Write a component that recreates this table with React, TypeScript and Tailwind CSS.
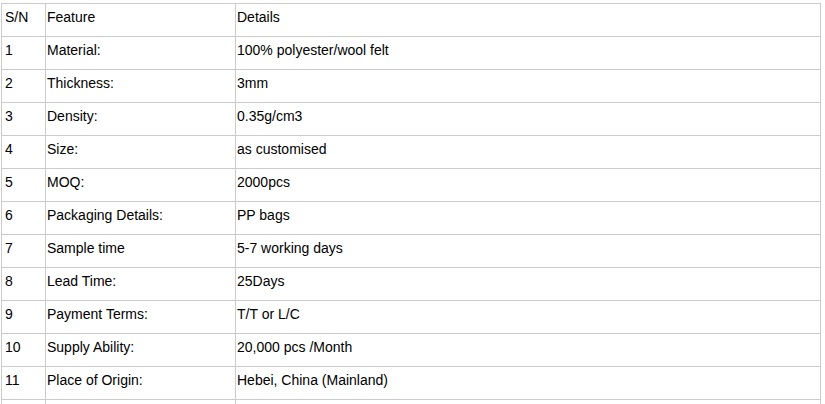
import * as React from "react";

const rows: [string, string, string][] = [
  ["S/N", "Feature", "Details"],
  ["1", "Material:", "100% polyester/wool felt"],
  ["2", "Thickness:", "3mm"],
  ["3", "Density:", "0.35g/cm3"],
  ["4", "Size:", "as customised"],
  ["5", "MOQ:", "2000pcs"],
  ["6", "Packaging Details:", "PP bags"],
  ["7", "Sample time", "5-7 working days"],
  ["8", "Lead Time:", "25Days"],
  ["9", "Payment Terms:", "T/T or L/C"],
  ["10", "Supply Ability:", "20,000 pcs /Month"],
  ["11", "Place of Origin:", "Hebei, China (Mainland)"],
  ["12", "", ""],
];

export default function App() {
  return (
    <div className="h-[404px] w-[825px] overflow-hidden bg-white pl-[1px] pt-[3px] font-['Liberation_Sans',Arial,sans-serif] text-[14px] leading-[16px] text-black">
      <div className="w-[820px] border-l border-t border-[#cbcbcb]">
        {rows.map(([sn, feature, details], i) => (
          <div key={i} className="grid h-[33px] grid-cols-[44px_190px_585px] border-b border-[#cbcbcb]">
            <div className="border-r border-[#cbcbcb] pl-[3px] pt-[5px]">{i === rows.length - 1 ? "" : sn}</div>
            <div className="border-r border-[#cbcbcb] pl-[1px] pt-[5px]">{feature}</div>
            <div className="border-r border-[#cbcbcb] pl-[1px] pt-[5px]">{details}</div>
          </div>
        ))}
      </div>
    </div>
  );
}
